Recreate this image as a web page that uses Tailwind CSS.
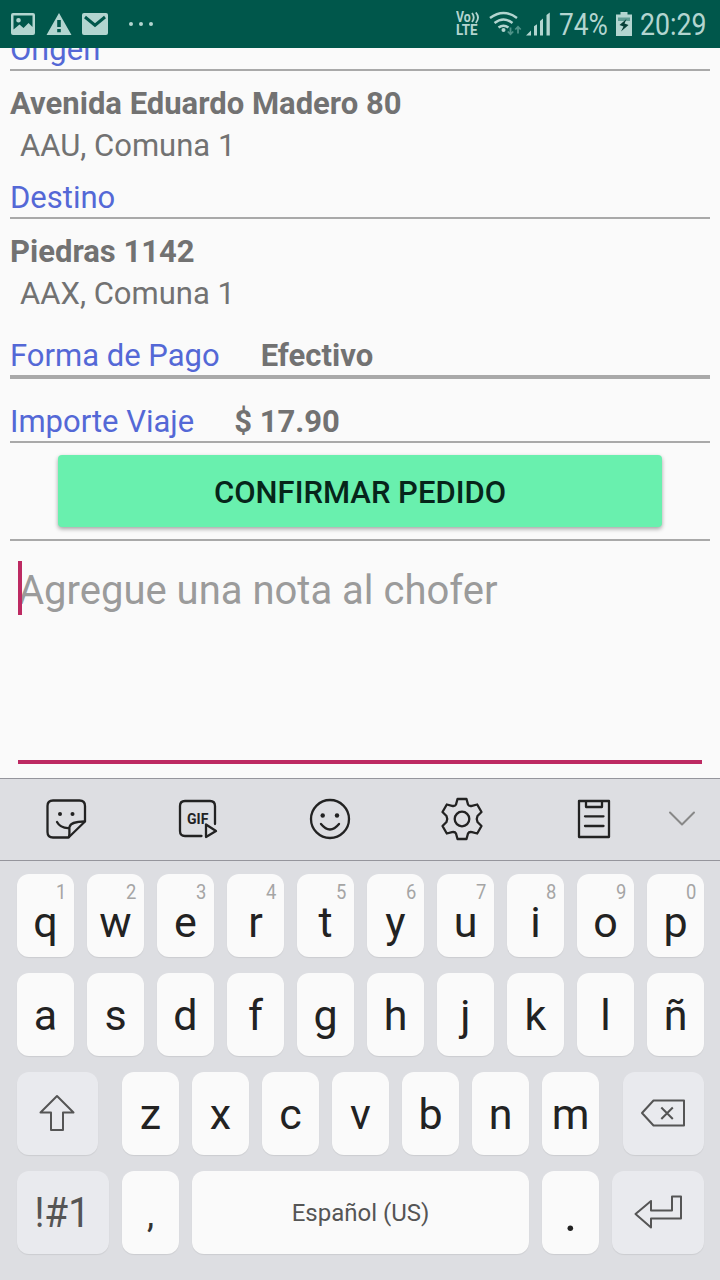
<!DOCTYPE html>
<html lang="es">
<head>
    <meta charset="UTF-8">
    <meta name="viewport" content="width=device-width, initial-scale=1.0">
    <title>Confirmar Pedido</title>
    <script src="https://cdn.jsdelivr.net/npm/@tailwindcss/browser@4"></script>
</head>
<body class="w-[720px] h-[1280px] overflow-hidden flex flex-col bg-[#fafafa] font-['Roboto',sans-serif]">

    <!-- Status bar -->
    <header class="relative z-10 h-12 shrink-0 bg-[#00574b] text-[#b3d5d0] flex items-center">
        <svg class="w-40 h-12" viewBox="0 0 160 48" fill="currentColor">
            <path fill-rule="evenodd" d="M13 13h20a2 2 0 0 1 2 2v18a2 2 0 0 1-2 2H13a2 2 0 0 1-2-2V15a2 2 0 0 1 2-2zm.5 2.500v14l6-5 4 3.500 5-5 4 4V15.500zM18.500 18a2.300 2.300 0 1 1 0 4.600 2.300 2.300 0 0 1 0-4.600z"/>
            <path fill-rule="evenodd" d="M59 13l12.500 22h-25zM57.200 20h3.600v7h-3.600zM57.200 29h3.600v3.300h-3.600z"/>
            <rect x="82" y="13" width="26" height="22" rx="2"/>
            <path d="M85 17l10 8.200 10-8.200" fill="none" stroke="#00574b" stroke-width="3"/>
            <circle cx="131" cy="24" r="2"/>
            <circle cx="141" cy="24" r="2"/>
            <circle cx="151" cy="24" r="2"/>
        </svg>
        <div class="ml-[296px] w-6 h-12 relative text-[14px] font-bold leading-[13px] pt-[11px]">
            <p class="origin-left scale-x-[0.88]">Vo</p>
            <p class="origin-left scale-x-[0.96]">LTE</p>
            <svg class="absolute left-[15px] top-[12px] w-[10px] h-3" viewBox="0 0 10 12" fill="none" stroke="currentColor" stroke-width="1.800">
                <path d="M1 1q3.500 4.500 0 9M4.800 0.500q4.500 5 0 10.500"/>
            </svg>
        </div>
        <svg class="ml-[8px] w-[64px] h-12" viewBox="488 0 64 48" fill="none" stroke="currentColor">
            <path d="M490 18q13.500-10 27 0M494.500 23q9-7 18 0M498.500 27.500q5-3.500 10 0" stroke-width="2.400"/>
            <circle cx="503.500" cy="30" r="2" fill="currentColor" stroke="none"/>
            <path d="M510.500 27.500v7M507.800 31.500l2.700 2.800 2.700-2.800M518 33.500v-7M515.300 29.500l2.700-2.800 2.700 2.800" stroke="#4f9389" stroke-width="1.800"/>
            <path d="M526 35.500l5-5v5zM534 35.500v-9.300l3-2v11.300zM540 35.500V21l3-2.500v17zM546.500 35.500V15l3.300-2.500v23z" fill="currentColor" stroke="none"/>
        </svg>
        <span class="ml-[7px] w-[49px] pt-0.5 text-[31px] leading-[48px] whitespace-nowrap"><span class="inline-block origin-left scale-x-[0.85]">74%</span></span>
        <svg class="ml-[7px] w-[18px] h-12" viewBox="615 0 18 48">
            <path d="M616 14.500h4.500V12h7v2.500h4.500V36h-16z" fill="currentColor"/>
            <path d="M618 17.500h12v3.500h-12z" fill="#5f9d94"/>
            <path d="M626.500 19l-7 6 4 1.500-2.500 5 7.500-6.500-4-1.500z" fill="#063f37"/>
        </svg>
        <span class="ml-[7px] pt-0.5 text-[31px] leading-[48px] whitespace-nowrap"><span class="inline-block origin-left scale-x-[0.86]">20:29</span></span>
    </header>

    <!-- Order details, scrolled partly under the status bar -->
    <main class="h-[730px] shrink-0 -mt-4 mb-4 px-2.5 text-[31px] leading-9 text-[#727272]">
        <h2 class="text-[#5468d6]">Origen</h2>
        <hr class="mt-px border-t-2 border-[#a9a9a9]">
        <p class="mt-[15px] font-bold">Avenida Eduardo Madero 80</p>
        <p class="mt-1.5 ml-2.5">AAU, Comuna 1</p>

        <h2 class="mt-4 text-[#5468d6]">Destino</h2>
        <hr class="mt-px border-t-2 border-[#a9a9a9]">
        <p class="mt-[15px] font-bold">Piedras 1142</p>
        <p class="mt-1.5 ml-2.5">AAX, Comuna 1</p>

        <div class="mt-[26px] flex gap-[41px]">
            <h2 class="text-[#5468d6]">Forma de Pago</h2>
            <p class="font-bold">Efectivo</p>
        </div>
        <hr class="mt-px border-t-4 border-[#a9a9a9]">

        <div class="mt-[25px] flex gap-10">
            <h2 class="text-[#5468d6]">Importe Viaje</h2>
            <p class="font-bold">$ 17.90</p>
        </div>
        <hr class="mt-px border-t-2 border-[#a9a9a9]">

        <button class="block mt-3 mx-12 w-[604px] h-[72px] pt-[3px] rounded-[4px] bg-[#69f0ae] text-[#06251a] font-medium shadow-[0_2px_4px_rgba(0,0,0,0.35)]">CONFIRMAR PEDIDO</button>
        <hr class="mt-3 border-t-2 border-[#a9a9a9]">

        <!-- Note for the driver -->
        <div class="mt-5 mx-2 h-[203px] border-b-4 border-[#bd2a62] relative">
            <p class="text-[40px] leading-[54px] pt-[3px] text-[#9b9b9b]">Agregue una nota al chofer</p>
            <span class="absolute left-0 top-0 w-1 h-[54px] bg-[#bd2a62]"></span>
        </div>
    </main>

    <!-- Keyboard -->
    <section class="h-[502px] shrink-0 bg-[#dddee2] text-[#222] relative">
        <div class="h-[83px] border-y border-[#95959c]">
            <svg class="w-[720px] h-[81px]" viewBox="0 779 720 81" fill="none" stroke="#222" stroke-width="2.300" stroke-linejoin="round" stroke-linecap="round">
                <!-- sticker -->
                <path d="M68.500 837.500H53q-5.500 0-5.500-5.500V806q0-5.500 5.500-5.500h26.500q5.500 0 5.500 5.500v15.500z"/>
                <path d="M69 837c1-4 0-8 .5-10 1-4 5-5.500 15-5.500M57 822q3.500 6.500 12.300 6"/>
                <g fill="#222" stroke="none">
                    <circle cx="60" cy="814" r="2"/><circle cx="72.500" cy="814" r="2"/>
                    <circle cx="322.700" cy="815.500" r="2.200"/><circle cx="337" cy="815.500" r="2.200"/>
                </g>
                <!-- gif -->
                <path d="M201.500 836H185q-5 0-5-5v-25q0-5 5-5h25q5 0 5 5v18M206 824.500v12.500l10-6z"/>
                <text x="197.700" y="823.500" text-anchor="middle" class="text-[14px] font-bold" fill="#222" stroke="none">GIF</text>
                <!-- emoji -->
                <circle cx="330" cy="819" r="19"/>
                <path d="M321 824q9 11 18 0"/>
                <!-- settings -->
                <circle cx="462" cy="819" r="7.300"/>
                <path d="M457.500 799h9l1.500 5.500q1 2 4 1.300l5.200-1.300 4.300 7.500-4 4q-1.500 3 0 6l4 4-4.300 7.500-5.200-1.300q-3-.7-4 1.300l-1.500 5.500h-9l-1.500-5.500q-1-2-4-1.300l-5.200 1.300-4.300-7.500 4-4q1.500-3 0-6l-4-4 4.300-7.500 5.200 1.300q3 .7 4-1.300z"/>
                <!-- clipboard -->
                <path d="M579 801h30v36h-30zM586 801v6h16v-6M585 816.300h18.500M585 826h18.500"/>
                <!-- collapse -->
                <path d="M670 812.500l12 12 12-12" stroke="#888" stroke-width="2"/>
            </svg>
        </div>

        <div class="pt-[13px] px-4 pl-[17px] flex flex-col gap-4">
            <div class="flex gap-[13px]" data-row="q1 w2 e3 r4 t5 y6 u7 i8 o9 p0"></div>
            <div class="flex gap-[13px]" data-row="a s d f g h j k l ñ"></div>
            <div class="flex gap-6">
                <div class="w-[81px] h-[83px] rounded-xl bg-[#e9eaee] shadow-[0_1px_1px_rgba(0,0,0,0.08)]">
                    <svg class="w-[81px] h-[83px]" viewBox="17 1072 81 83" fill="none" stroke="#555" stroke-width="2" stroke-linejoin="round">
                        <path d="M57 1096l16.500 16.500H63V1130H51v-17.500H40.500z"/>
                    </svg>
                </div>
                <div class="flex gap-[13px]" data-row="z x c v b n m"></div>
                <div class="w-[81px] h-[83px] rounded-xl bg-[#e9eaee] shadow-[0_1px_1px_rgba(0,0,0,0.08)]">
                    <svg class="w-[81px] h-[83px]" viewBox="623 1072 81 83" fill="none" stroke="#555" stroke-width="2" stroke-linejoin="round">
                        <path d="M653.500 1100.500H684v25h-30.500l-11.500-12.500zM661.300 1107.500l11.500 11.500M672.800 1107.500l-11.500 11.500"/>
                    </svg>
                </div>
            </div>
            <div class="flex gap-[13px] text-[#555]">
                <div class="w-[92px] h-[83px] rounded-xl bg-[#e9eaee] shadow-[0_1px_1px_rgba(0,0,0,0.08)] text-[42px] leading-[84px] text-center"><span class="inline-block -ml-0.5 scale-x-[0.92]">!#1</span></div>
                <div class="w-[57px] h-[83px] rounded-xl bg-[#fafafa] shadow-[0_1px_1px_rgba(0,0,0,0.08)] text-[36px] leading-[88px] text-center text-[#333]">,</div>
                <div class="w-[337px] h-[83px] rounded-xl bg-[#fafafa] shadow-[0_1px_1px_rgba(0,0,0,0.08)] text-2xl leading-[85px] text-center">Español (US)</div>
                <div class="w-[57px] h-[83px] rounded-xl bg-[#fafafa] shadow-[0_1px_1px_rgba(0,0,0,0.08)] text-[50px] leading-[86px] text-center text-[#222]">.</div>
                <div class="w-[92px] h-[83px] rounded-xl bg-[#e9eaee] shadow-[0_1px_1px_rgba(0,0,0,0.08)]">
                    <svg class="w-[92px] h-[83px]" viewBox="612 1171 92 83" fill="none" stroke="#555" stroke-width="2" stroke-linejoin="round">
                        <path d="M635.500 1214l15.500-13v9.500h21V1196.500h9v22H651v9z"/>
                    </svg>
                </div>
            </div>
        </div>
    </section>

    <script>
        // Each entry is a letter, optionally followed by its long-press digit
        document.querySelectorAll('[data-row]').forEach(row => {
            row.innerHTML = row.dataset.row.split(' ').map(([letter, digit]) => `
                <div class="w-[57px] h-[83px] rounded-xl bg-[#fafafa] shadow-[0_1px_1px_rgba(0,0,0,0.08)] text-center text-[43px] ${digit ? 'leading-[49px]' : 'leading-[84px]'}">
                    ${digit ? `<p class="h-6 pt-[6px] pr-[8px] text-right text-[20px] leading-6 text-[#a5a5a5]"><span class="inline-block origin-right scale-x-[0.92]">${digit}</span></p>` : ''}
                    <p>${letter}</p>
                </div>`).join('');
        });
    </script>
</body>
</html>
